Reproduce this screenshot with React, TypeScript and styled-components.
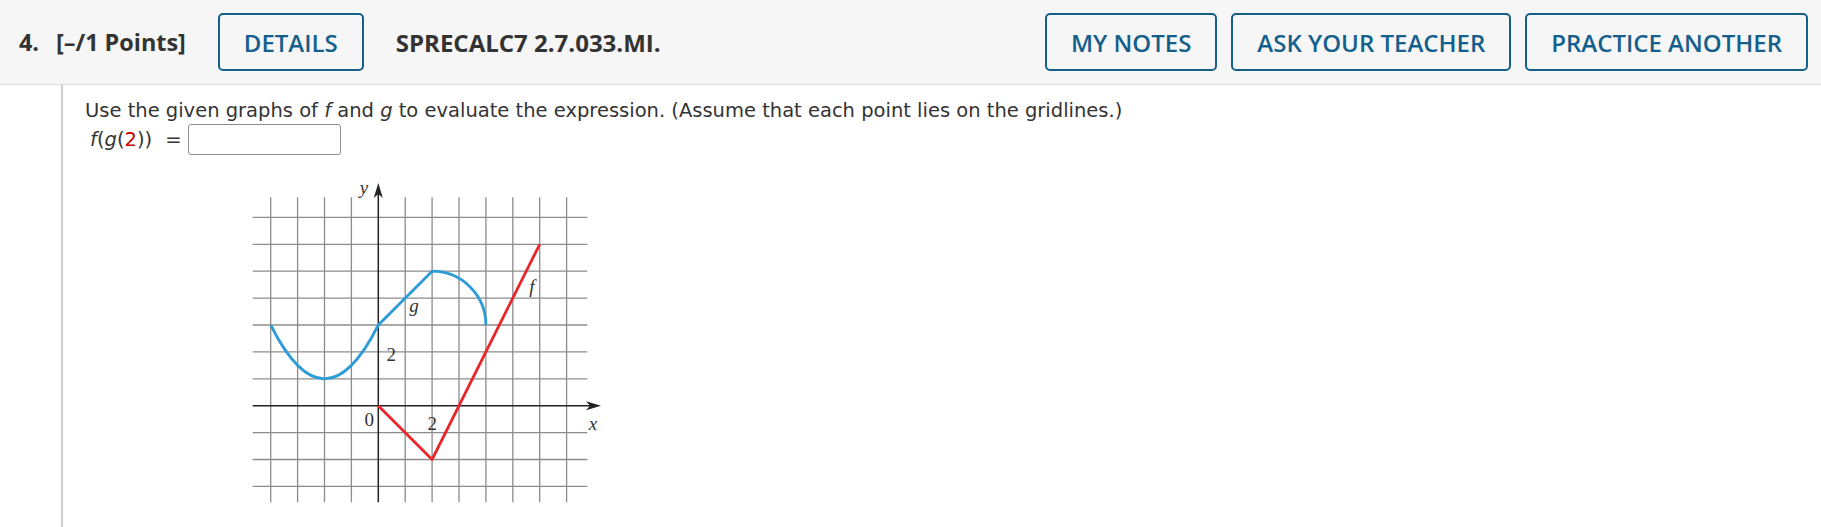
import styled, { createGlobalStyle } from 'styled-components';

const GlobalStyle = createGlobalStyle`
    body {
        margin: 0;
        background: #fff;
        font-family: "DejaVu Sans", Verdana, sans-serif;
    }
`;

const BLUE = '#155f8c';

// graph geometry (px)
const U = 26.9;
const OX = 138.3;
const OY = 236.7;
const TOP = 28.3;
const BOTTOM = 333.3;
const X = (i: number) => OX + i * U;
const Y = (j: number) => OY - j * U;

const App: React.FC = () => {
    return (
        <Page>
            <GlobalStyle />
            <Header>
                <HeaderText>4.</HeaderText>
                <Points>[–/1 Points]</Points>
                <OutlineButton>DETAILS</OutlineButton>
                <QuestionCode>SPRECALC7 2.7.033.MI.</QuestionCode>
                <Spacer />
                <ButtonGroup>
                    <OutlineButton>MY NOTES</OutlineButton>
                    <OutlineButton>ASK YOUR TEACHER</OutlineButton>
                    <OutlineButton>PRACTICE ANOTHER</OutlineButton>
                </ButtonGroup>
            </Header>

            <Body>
                <Gutter />
                <Content>
                    <Prompt>
                        Use the given graphs of <Var>f</Var> and <Var>g</Var> to evaluate the expression. (Assume that each point lies on the gridlines.)
                    </Prompt>
                    <AnswerRow>
                        <span><Var>f</Var>(<Var>g</Var>(<Red>2</Red>))</span>
                        <Equals>=</Equals>
                        <AnswerInput type="text" />
                    </AnswerRow>
                    <Graph />
                </Content>
            </Body>
        </Page>
    )
}

const Graph: React.FC = () => {
    const cols = [-4, -3, -2, -1, 1, 2, 3, 4, 5, 6, 7];
    const rows = [-3, -2, -1, 1, 2, 3, 4, 5, 6, 7];
    return (
        <GraphSvg width={370} height={345} viewBox="0 0 370 345">
            {cols.map(i => (
                <line key={'v' + i} x1={X(i)} x2={X(i)} y1={TOP} y2={BOTTOM} stroke="#8c8c8c" strokeWidth={1.3} />
            ))}
            {rows.map(j => (
                <line key={'h' + j} x1={12.7} x2={347.3} y1={Y(j)} y2={Y(j)} stroke="#8c8c8c" strokeWidth={1.3} />
            ))}

            {/* axes */}
            <line x1={12.7} x2={356} y1={OY} y2={OY} stroke="#222" strokeWidth={1.5} />
            <line x1={OX} x2={OX} y1={BOTTOM} y2={20} stroke="#222" strokeWidth={1.5} />
            <path d={`M361 ${OY} L346 ${OY - 4.5} L350 ${OY} L346 ${OY + 4.5} Z`} fill="#222" />
            <path d={`M${OX} 14 L${OX - 4.5} 29 L${OX} 25 L${OX + 4.5} 29 Z`} fill="#222" />

            {/* g */}
            <path
                d={`M${X(-4)} ${Y(3)} Q${X(-2)} ${Y(-1)} ${X(0)} ${Y(3)} L${X(2)} ${Y(5)} A${2 * U} ${2 * U} 0 0 1 ${X(4)} ${Y(3)}`}
                fill="none" stroke="#2b9cd8" strokeWidth={2.8} strokeLinejoin="round"
            />
            {/* f */}
            <path
                d={`M${X(0)} ${Y(0)} L${X(2)} ${Y(-2)} L${X(6)} ${Y(6)}`}
                fill="none" stroke="#e8272d" strokeWidth={2.8} strokeLinejoin="round"
            />

            <GraphLabel x={124} y={25} italic>y</GraphLabel>
            <GraphLabel x={353} y={261} italic>x</GraphLabel>
            <GraphLabel x={129.3} y={256.7}>0</GraphLabel>
            <GraphLabel x={192.3} y={260.7}>2</GraphLabel>
            <GraphLabel x={151.3} y={191.7}>2</GraphLabel>
            <GraphLabel x={174} y={143} italic>g</GraphLabel>
            <GraphLabel x={292} y={124} italic>f</GraphLabel>
        </GraphSvg>
    )
}

const GraphLabel = styled.text.attrs({ textAnchor: 'middle' })<{ italic?: boolean }>`
    font-family: "Liberation Serif", "Times New Roman", serif;
    font-size: 19px;
    font-style: ${props => props.italic ? 'italic' : 'normal'};
    fill: #333;
`;

const Page = styled.div`
    min-height: 100vh;
    display: flex;
    flex-direction: column;
`;

const Header = styled.div`
    display: flex;
    align-items: center;
    height: 84px;
    padding: 0 13px 0 19px;
    background: #f6f6f6;
    border-bottom: 1px solid #dcdcdc;
    font-family: "Open Sans", "Liberation Sans", sans-serif;
`;

const HeaderText = styled.span`
    font-size: 23.4px;
    font-weight: 700;
    color: #333;
`;

const Points = styled(HeaderText)`
    margin-left: 17px;
    margin-right: 32px;
`;

const QuestionCode = styled(HeaderText)`
    margin-left: 32px;
    font-size: 24px;
`;

const Spacer = styled.div`
    flex: 1;
`;

const ButtonGroup = styled.div`
    display: flex;
    gap: 14px;
`;

const OutlineButton = styled.button`
    height: 58px;
    padding: 0 24px;
    border: 2px solid ${BLUE};
    border-radius: 5px;
    background: transparent;
    color: ${BLUE};
    font-family: "Open Sans", "Liberation Sans", sans-serif;
    font-size: 24px;
    font-weight: 600;
    white-space: nowrap;
`;

const Body = styled.div`
    flex: 1;
    display: flex;
`;

const Gutter = styled.div`
    width: 61px;
    border-right: 2px solid #cccccc;
`;

const Content = styled.div`
    flex: 1;
    padding: 14px 0 0 22px;
    color: #333;
    font-size: 19.5px;
`;

const Prompt = styled.p`
    margin: 0;
    line-height: 23px;
`;

const Var = styled.i`
    font-style: italic;
`;

const Red = styled.span`
    color: #cc0000;
`;

const AnswerRow = styled.div`
    display: flex;
    align-items: center;
    margin: 2px 0 0 5px;
`;

const Equals = styled.span`
    margin: 0 7px 0 13px;
`;

const AnswerInput = styled.input`
    box-sizing: border-box;
    width: 153px;
    height: 31px;
    border: 1px solid #8d8d8d;
    border-radius: 3px;
    background: #fff;
`;

const GraphSvg = styled.svg`
    display: block;
    margin: 14px 0 0 155px;
`;

export default App
